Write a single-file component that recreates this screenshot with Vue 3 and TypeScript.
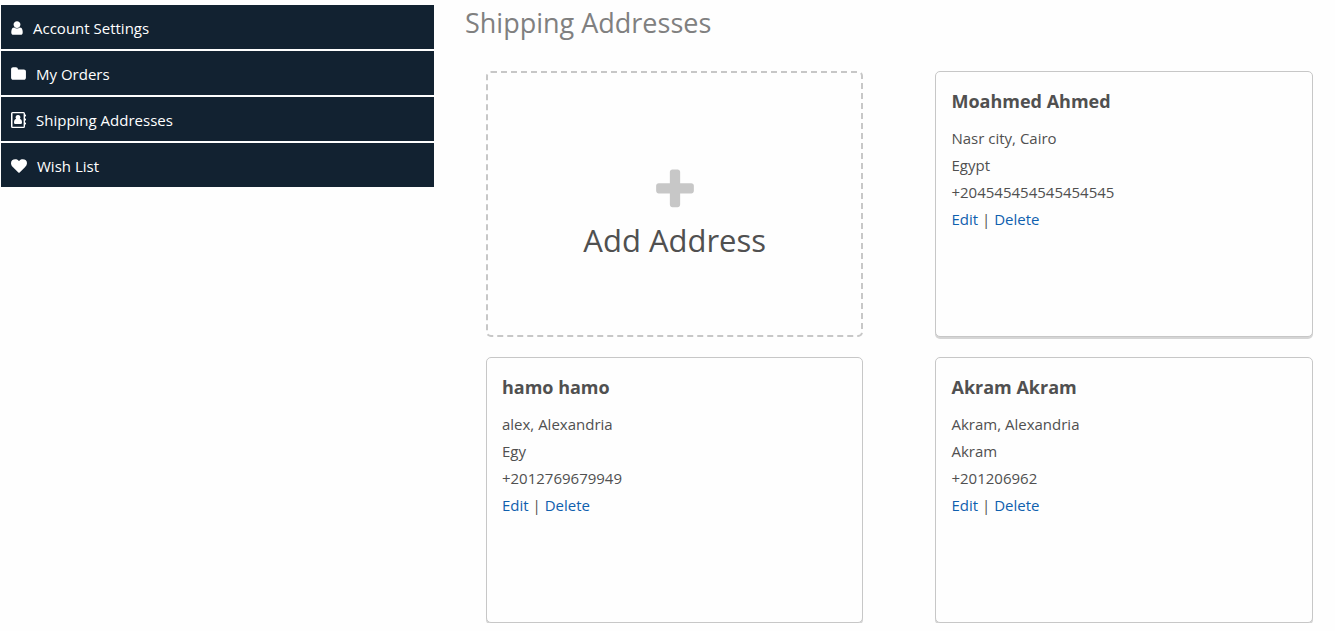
<script setup lang="ts">
interface MenuItem {
  label: string
  viewBox: string
  width: number
  path: string
}

interface Address {
  id: number
  name: string
  city: string
  country: string
  phone: string
}

const menu: MenuItem[] = [
  {
    label: 'Account Settings',
    viewBox: '256 0 1280 1792',
    width: 12,
    path: 'M1536 1399q0 109-62.5 187t-150.5 78h-854q-88 0-150.5-78t-62.5-187q0-85 8.5-160.5t31.5-152 58.5-131 94-89 134.5-34.5q131 128 313 128t313-128q76 0 134.5 34.5t94 89 58.5 131 31.5 152 8.5 160.5zm-256-887q0 159-112.5 271.5t-271.5 112.5-271.5-112.5-112.5-271.5 112.5-271.5 271.5-112.5 271.5 112.5 112.5 271.5z',
  },
  {
    label: 'My Orders',
    viewBox: '64 0 1664 1792',
    width: 15,
    path: 'M1728 608v704q0 92-66 158t-158 66h-1216q-92 0-158-66t-66-158v-960q0-92 66-158t158-66h320q92 0 158 66t66 158v32h672q92 0 158 66t66 158z',
  },
  {
    label: 'Shipping Addresses',
    viewBox: '0 0 15 16',
    width: 15,
    path: 'M1.5 0H12.5A1.5 1.5 0 0 1 14 1.5V2.5H14.6A.4 .4 0 0 1 15 2.9V4.1A.4 .4 0 0 1 14.6 4.5H14V6.5H14.6A.4 .4 0 0 1 15 6.9V8.1A.4 .4 0 0 1 14.6 8.5H14V10.5H14.6A.4 .4 0 0 1 15 10.9V12.1A.4 .4 0 0 1 14.6 12.5H14V14.5A1.5 1.5 0 0 1 12.5 16H1.5A1.5 1.5 0 0 1 0 14.5V1.5A1.5 1.5 0 0 1 1.5 0ZM1.5 1.2V14.8H12.6V1.2ZM7 3A2.4 2.4 0 0 1 8.9 6.9Q11 7.3 11 10.5Q11 12 9.8 12H4.2Q3 12 3 10.5Q3 7.3 5.1 6.9A2.4 2.4 0 0 1 7 3Z',
  },
  {
    label: 'Wish List',
    viewBox: '0 0 1792 1792',
    width: 16,
    path: 'M896 1664q-26 0-44-18l-624-602q-10-8-27.5-26t-55.5-65.5-68-97.5-53.5-121-23.5-138q0-220 127-344t351-124q62 0 126.5 21.5t120 58 95.5 68.5 76 68q36-36 76-68t95.5-68.5 120-58 126.5-21.5q224 0 351 124t127 344q0 221-229 450l-623 600q-18 18-44 18z',
  },
]

const addresses: Address[] = [
  { id: 1, name: 'Moahmed Ahmed', city: 'Nasr city, Cairo', country: 'Egypt', phone: '+204545454545454545' },
  { id: 2, name: 'hamo hamo', city: 'alex, Alexandria', country: 'Egy', phone: '+2012769679949' },
  { id: 3, name: 'Akram Akram', city: 'Akram, Alexandria', country: 'Akram', phone: '+201206962' },
]
</script>

<template>
  <div class="page">
    <nav class="menu" aria-label="Account">
      <a v-for="item in menu" :key="item.label" class="menu-link" href="#">
        <svg class="menu-icon" :viewBox="item.viewBox" :width="item.width" height="16" aria-hidden="true">
          <path :d="item.path" fill="currentColor" fill-rule="evenodd" />
        </svg>
        <span>{{ item.label }}</span>
      </a>
    </nav>

    <main class="content">
      <h1 class="title">Shipping Addresses</h1>
      <div class="cards">
        <button class="add-card" type="button">
          <svg class="plus" viewBox="0 0 1792 1792" width="48" height="48" aria-hidden="true">
            <path
              fill="currentColor"
              d="M1600 736v192q0 40-28 68t-68 28h-416v416q0 40-28 68t-68 28h-192q-40 0-68-28t-28-68v-416h-416q-40 0-68-28t-28-68v-192q0-40 28-68t68-28h416v-416q0-40 28-68t68-28h192q40 0 68 28t28 68v416h416q40 0 68 28t28 68z"
            />
          </svg>
          <span>Add Address</span>
        </button>

        <article v-for="address in addresses" :key="address.id" class="card">
          <h2 class="name">{{ address.name }}</h2>
          <p class="line">{{ address.city }}</p>
          <p class="line">{{ address.country }}</p>
          <p class="line">{{ address.phone }}</p>
          <p class="line actions"><a href="#">Edit</a> | <a href="#">Delete</a></p>
        </article>
      </div>
    </main>
  </div>
</template>

<style>
body {
  background: #fefefe;
}
</style>

<style scoped>
.page {
  display: grid;
  grid-template-columns: 33% 1fr;
  align-items: start;
  column-gap: 31px;
  padding: 5px 22px 0 1px;
  font-family: 'Segoe UI', 'Open Sans', 'Noto Sans', sans-serif;
  font-size: 15px;
  color: #505050;
}

.menu {
  display: grid;
  gap: 2px;
}

.menu-link {
  display: flex;
  align-items: center;
  gap: 10px;
  height: 44px;
  padding: 2px 10px 0;
  box-sizing: border-box;
  background: #122231;
  color: #fff;
  text-decoration: none;
}

.menu-icon {
  flex: none;
}

.title {
  margin: 0;
  font-size: 27px;
  line-height: 36px;
  font-weight: 400;
  color: #808080;
}

.cards {
  display: grid;
  grid-template-columns: 1fr 1fr;
  gap: 20px 72px;
  margin-top: 30px;
  padding-left: 21px;
}

.add-card,
.card {
  box-sizing: border-box;
  min-height: 266px;
  border-radius: 5px;
  background: #fefefe;
}

.add-card {
  display: flex;
  flex-direction: column;
  align-items: center;
  justify-content: center;
  padding: 24px 0 0;
  border: 2px dashed #c7c7c7;
  font: inherit;
  font-size: 31px;
  line-height: 52px;
  color: #505050;
  cursor: pointer;
}

.plus {
  color: #c7c7c7;
}

.card {
  padding: 13px 15px;
  border: 1px solid #c7c7c7;
  box-shadow: 0 2px 0 #d5d5d5;
}

.name {
  margin: 0 0 8px;
  font-size: 18px;
  line-height: 32px;
  font-weight: 700;
}

.line {
  margin: 0;
  line-height: 27px;
}

.actions a {
  color: #0f60ae;
  text-decoration: none;
}
</style>
